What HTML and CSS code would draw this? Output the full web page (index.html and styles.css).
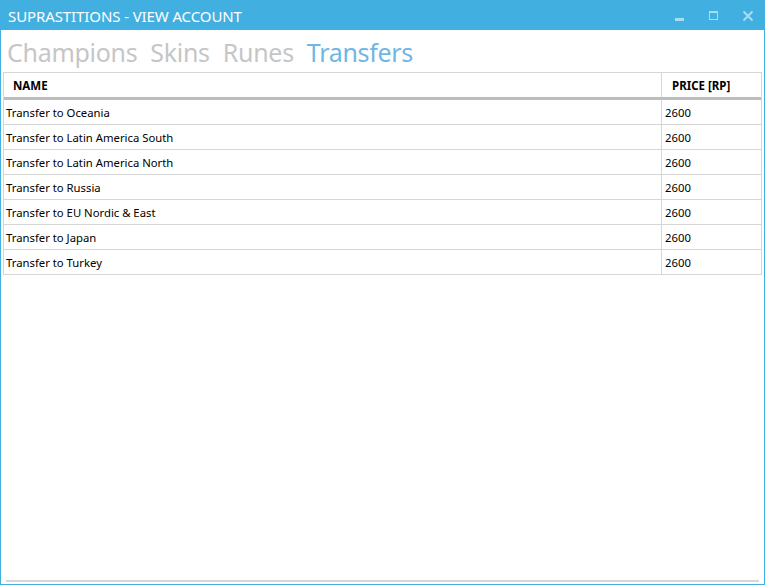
FILE: index.html
```html
<!DOCTYPE html>
<html>
<head>
<meta charset="utf-8">
<link rel="stylesheet" href="styles.css">
</head>
<body>
<div class="window">
  <div class="titlebar">
    <div class="title">SUPRASTITIONS - VIEW ACCOUNT</div>
    <div class="controls">
      <svg class="ctl" width="12" height="12" viewBox="0 0 12 12"><rect x="1" y="8" width="9" height="3" fill="#a9dcf3"/></svg>
      <svg class="ctl" width="12" height="12" viewBox="0 0 12 12"><rect x="1.5" y="1.5" width="8" height="8" fill="none" stroke="#a9dcf3" stroke-width="1"/><rect x="1" y="1" width="9" height="2" fill="#a9dcf3"/></svg>
      <svg class="ctl" width="12" height="12" viewBox="0 0 12 12"><path d="M1.5 1.5 L10.5 10.5 M10.5 1.5 L1.5 10.5" stroke="#a9dcf3" stroke-width="2"/></svg>
    </div>
  </div>
  <div class="content">
    <div class="tabs">
      <span class="tab">Champions</span>
      <span class="tab">Skins</span>
      <span class="tab">Runes</span>
      <span class="tab active">Transfers</span>
    </div>
    <div class="grid">
      <div class="row head">
        <div class="c1">NAME</div>
        <div class="c2">PRICE [RP]</div>
      </div>
      <div class="row"><div class="c1">Transfer to Oceania</div><div class="c2">2600</div></div>
      <div class="row"><div class="c1">Transfer to Latin America South</div><div class="c2">2600</div></div>
      <div class="row"><div class="c1">Transfer to Latin America North</div><div class="c2">2600</div></div>
      <div class="row"><div class="c1">Transfer to Russia</div><div class="c2">2600</div></div>
      <div class="row"><div class="c1">Transfer to EU Nordic &amp; East</div><div class="c2">2600</div></div>
      <div class="row"><div class="c1">Transfer to Japan</div><div class="c2">2600</div></div>
      <div class="row"><div class="c1">Transfer to Turkey</div><div class="c2">2600</div></div>
    </div>
    <div class="spacer"></div>
    <div class="bottomline"></div>
  </div>
</div>
</body>
</html>
```
FILE: styles.css
```css
html, body {
  margin: 0;
  padding: 0;
  background: #ffffff;
}
.window {
  width: 765px;
  height: 585px;
  box-sizing: border-box;
  border: 1px solid #41b0e1;
  display: flex;
  flex-direction: column;
  font-family: "Noto Sans", "Open Sans", sans-serif;
}
.titlebar {
  height: 29px;
  background: #41b0e1;
  display: flex;
  align-items: center;
  justify-content: space-between;
  flex-shrink: 0;
}
.title {
  color: #ffffff;
  font-size: 15px;
  padding-left: 7px;
  letter-spacing: -0.1px;
}
.controls {
  display: flex;
  gap: 22px;
  padding-right: 10px;
  align-items: center;
}
.ctl {
  display: block;
}
.content {
  flex: 1;
  display: flex;
  flex-direction: column;
  padding: 0 2px 0 2px;
}
.tabs {
  height: 42px;
  display: flex;
  align-items: center;
  gap: 13px;
  padding-left: 4px;
  padding-top: 1px;
  box-sizing: border-box;
}
.tab {
  font-size: 25px;
  color: #c6c6c6;
  letter-spacing: -0.3px;
}
.tab.active {
  color: #6fb6e5;
}
.grid {
  border: 1px solid #d6d6d6;
  border-bottom: none;
}
.row {
  display: flex;
  height: 25px;
  border-bottom: 1px solid #d6d6d6;
  box-sizing: border-box;
  font-size: 11.3px;
  color: #000;
}
.row .c1 {
  flex: 1;
  border-right: 1px solid #d6d6d6;
  padding-left: 2px;
  display: flex;
  align-items: center;
}
.row .c2 {
  width: 99px;
  box-sizing: border-box;
  padding-left: 3px;
  display: flex;
  align-items: center;
}
.row.head {
  height: 27px;
  border-bottom: 3px solid #bdbdbd;
  font-weight: bold;
  font-size: 11.5px;
}
.row.head .c1 {
  padding-left: 9px;
}
.row.head .c2 {
  padding-left: 10px;
}
.spacer {
  flex: 1;
}
.bottomline {
  height: 2px;
  background: #d6d6d6;
  margin: 0 3px 2px 3px;
}
```
